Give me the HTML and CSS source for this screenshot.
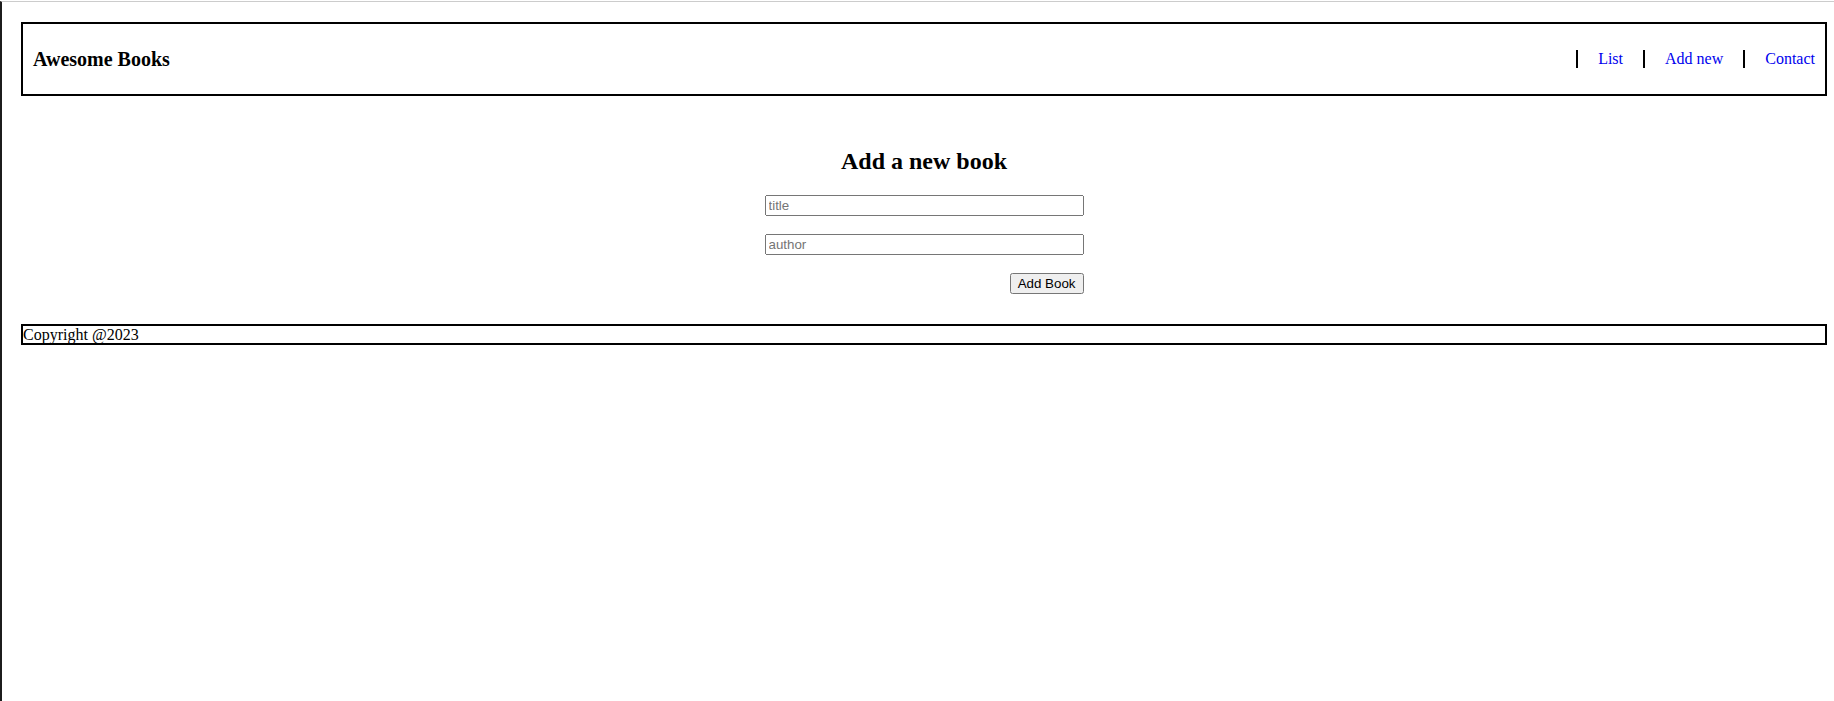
FILE: index.html
```html
<!DOCTYPE html>
<html lang="en">
<head>
<meta charset="utf-8">
<title>Awesome Books</title>
<link rel="stylesheet" href="styles.css">
</head>
<body>
<div class="page">
  <header class="topbar">
    <h1 class="brand">Awesome Books</h1>
    <ul class="nav">
      <li class="nav-item"><a href="#list">List</a></li>
      <li class="nav-item"><a href="#add">Add new</a></li>
      <li class="nav-item"><a href="#contact">Contact</a></li>
    </ul>
  </header>
  <main class="content">
    <section class="add-section">
      <h2 class="add-title">Add a new book</h2>
      <form class="add-form">
        <input class="field" type="text" placeholder="title">
        <input class="field" type="text" placeholder="author">
        <button class="add-btn" type="button">Add Book</button>
      </form>
    </section>
  </main>
  <footer class="footer">Copyright @2023</footer>
</div>
</body>
</html>
```
FILE: styles.css
```css
html {
  margin-top: 1px;
  border-top: 1px solid #cccccc;
  border-left: 2px solid #1c1c1c;
  min-height: 100%;
  background: #ffffff;
}

body {
  margin: 0;
  font-family: "Liberation Serif", "Times New Roman", serif;
  font-size: 16px;
  color: #000;
}

.page {
  padding: 20px 7px 0 19px;
}

.topbar {
  display: flex;
  align-items: center;
  justify-content: space-between;
  border: 2px solid #000;
  padding: 0 10px;
  height: 70px;
}

.brand {
  margin: 0;
  font-size: 20px;
  font-weight: bold;
}

.nav {
  display: flex;
  list-style: none;
  margin: 0;
  padding: 0;
}

.nav-item {
  border-left: 2px solid #000;
  padding-left: 20px;
  margin-left: 20px;
  line-height: 18px;
}

.nav-item a {
  color: #0000ee;
  text-decoration: none;
}

.content {
  padding-top: 32px;
}

.add-section {
  display: flex;
  flex-direction: column;
  align-items: center;
}

.add-title {
  margin: 20px 0;
  font-size: 24px;
  font-weight: bold;
}

.add-form {
  display: flex;
  flex-direction: column;
  align-items: flex-end;
  gap: 18px;
  width: 319px;
}

.field {
  box-sizing: border-box;
  width: 100%;
  height: 21px;
  font-family: "Liberation Sans", Arial, sans-serif;
  font-size: 13.333px;
  margin: 0;
}

.add-btn {
  font-family: "Liberation Sans", Arial, sans-serif;
  font-size: 13.333px;
  margin: 0;
  height: 21px;
}

.footer {
  margin-top: 30px;
  border: 2px solid #000;
  line-height: 17px;
}
```
